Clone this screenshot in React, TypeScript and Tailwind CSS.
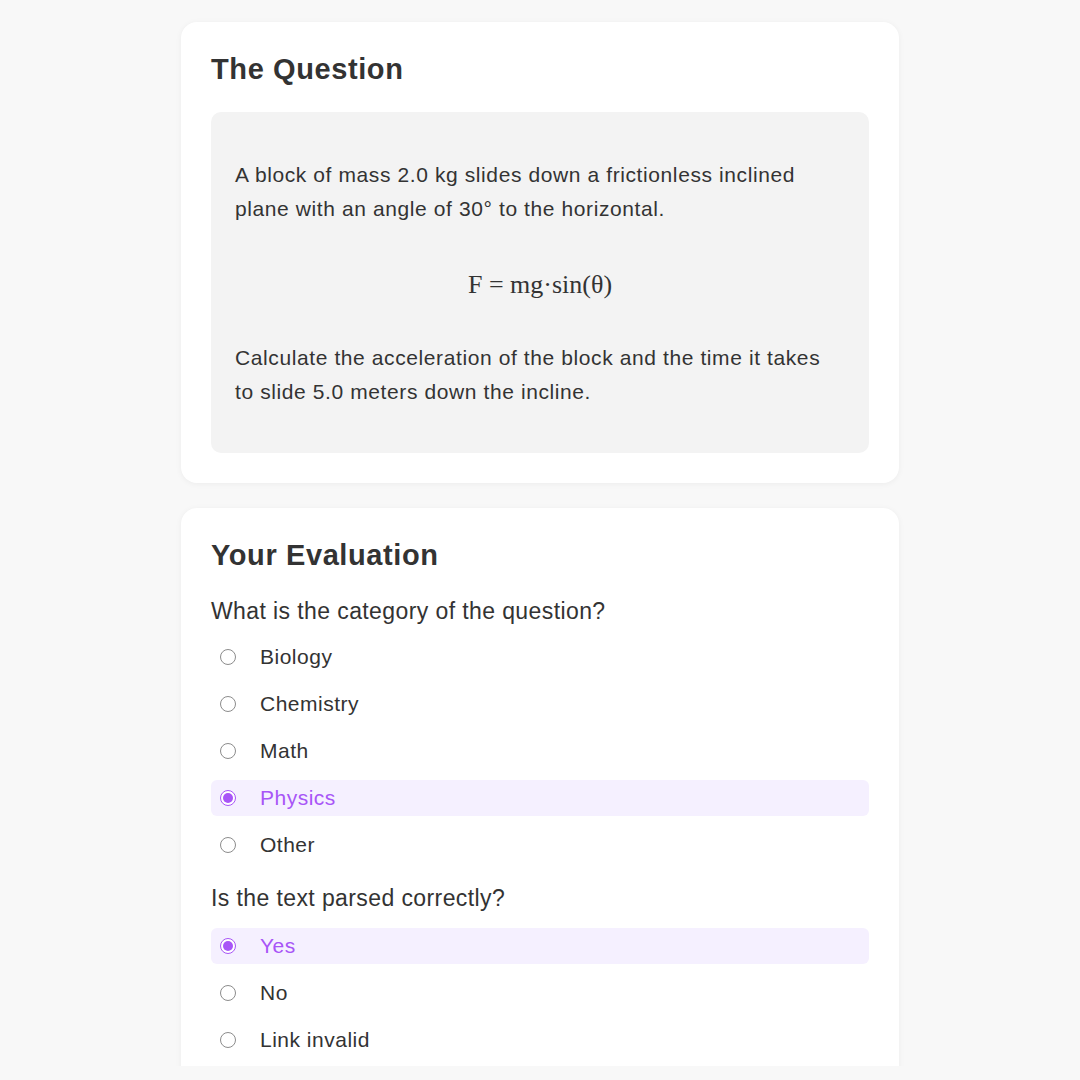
import { useState } from "react";

type Option = { value: string; label: string };

const categoryOptions: Option[] = [
  { value: "biology", label: "Biology" },
  { value: "chemistry", label: "Chemistry" },
  { value: "math", label: "Math" },
  { value: "physics", label: "Physics" },
  { value: "other", label: "Other" },
];

const parseOptions: Option[] = [
  { value: "yes", label: "Yes" },
  { value: "no", label: "No" },
  { value: "invalid", label: "Link invalid" },
];

function RadioDot({ checked }: { checked: boolean }) {
  if (checked) {
    return (
      <span className="flex h-[16px] w-[16px] shrink-0 items-center justify-center rounded-full border-[1.5px] border-[#a855f7] bg-white">
        <span className="h-[10px] w-[10px] rounded-full bg-[#a855f7]" />
      </span>
    );
  }
  return (
    <span className="h-[16px] w-[16px] shrink-0 rounded-full border border-[#8c8c8c] bg-white" />
  );
}

function RadioGroup({
  options,
  value,
  onChange,
}: {
  options: Option[];
  value: string;
  onChange: (value: string) => void;
}) {
  return (
    <div className="flex flex-col gap-[11px]">
      {options.map((option) => {
        const checked = option.value === value;
        return (
          <button
            key={option.value}
            type="button"
            onClick={() => onChange(option.value)}
            className={
              checked
                ? "flex h-[36px] items-center gap-[24px] rounded-[6px] bg-[#f5f0ff] pl-[9px] text-left text-[21px] tracking-[0.5px] text-[#a855f7]"
                : "flex h-[36px] items-center gap-[24px] rounded-[6px] pl-[9px] text-left text-[21px] tracking-[0.5px] text-[#333333]"
            }
          >
            <RadioDot checked={checked} />
            <span>{option.label}</span>
          </button>
        );
      })}
    </div>
  );
}

export default function App() {
  const [category, setCategory] = useState("physics");
  const [parsed, setParsed] = useState("yes");

  return (
    <div className="h-[1080px] overflow-hidden bg-[#f8f8f8] font-['Liberation_Sans',Arial,sans-serif] text-[#333333]">
      <div className="h-[1066px] overflow-hidden">
        <div className="mx-auto flex w-[718px] flex-col gap-[25px] pt-[22px]">
          <section className="rounded-[16px] bg-white px-[30px] pb-[30px] pt-[30px] shadow-[0_1px_6px_rgba(0,0,0,0.05)]">
            <h2 className="text-[29px] font-bold leading-[34px] tracking-[0.6px]">
              The Question
            </h2>
            <div className="mt-[26px] rounded-[10px] bg-[#f3f3f3] px-[24px] pb-[44px] pt-[46px] text-[21px] leading-[34px] tracking-[0.6px]">
              <p>
                A block of mass 2.0 kg slides down a frictionless inclined
                plane with an angle of 30° to the horizontal.
              </p>
              <div className="flex h-[115px] items-center justify-center pt-[2px] font-['Liberation_Serif','Times_New_Roman',serif] text-[26px] tracking-normal">
                F = mg·sin(θ)
              </div>
              <p>
                Calculate the acceleration of the block and the time it takes
                to slide 5.0 meters down the incline.
              </p>
            </div>
          </section>

          <section className="rounded-[16px] bg-white px-[30px] pb-[30px] pt-[30px] shadow-[0_1px_6px_rgba(0,0,0,0.05)]">
            <h2 className="text-[29px] font-bold leading-[34px] tracking-[0.6px]">
              Your Evaluation
            </h2>
            <p className="mt-[25px] text-[23px] leading-[28px] tracking-[0.4px]">
              What is the category of the question?
            </p>
            <div className="mt-[14px]">
              <RadioGroup
                options={categoryOptions}
                value={category}
                onChange={setCategory}
              />
            </div>
            <p className="mt-[21px] text-[23px] leading-[28px] tracking-[0.4px]">
              Is the text parsed correctly?
            </p>
            <div className="mt-[16px]">
              <RadioGroup
                options={parseOptions}
                value={parsed}
                onChange={setParsed}
              />
            </div>
          </section>
        </div>
      </div>
    </div>
  );
}
